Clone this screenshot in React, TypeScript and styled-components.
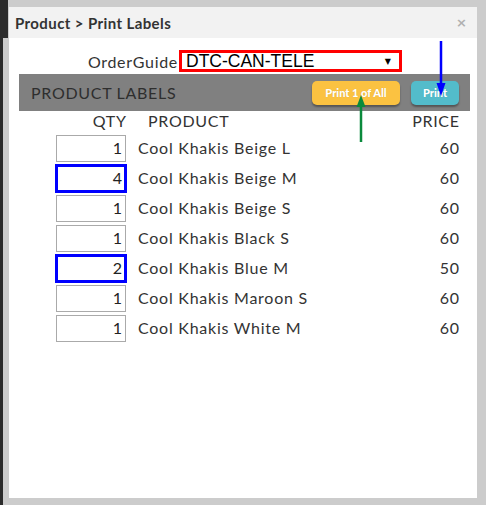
import React from "react";
import styled, { createGlobalStyle } from "styled-components";

const Global = createGlobalStyle`
  html, body { margin: 0; padding: 0; }
  body {
    background: #cccccc;
    font-family: Lato, "Open Sans", sans-serif;
    color: #333;
  }
  #root { min-height: 505px; }
`;

const Page = styled.div`
  position: relative;
  height: 505px;
  box-sizing: border-box;
  border-left: 3px solid #2b2b2b;
  padding: 7px 9px 7px 6px;
  &::before {
    content: "";
    position: absolute;
    left: -3px;
    top: 0;
    width: 8px;
    height: 38px;
    background: #2b2b2b;
  }
`;

const Modal = styled.div`
  position: relative;
  height: 491px;
  background: #fff;
  display: flex;
  flex-direction: column;
`;

const TitleBar = styled.div`
  height: 31px;
  background: #f2f2f2;
  display: flex;
  align-items: center;
  justify-content: space-between;
  padding: 0 10px 0 6px;
`;

const Title = styled.div`
  font-weight: 700;
  font-size: 15px;
  letter-spacing: 0.4px;
  color: #333;
`;

const Close = styled.span`
  font-size: 13px;
  font-weight: 700;
  color: #b0b0b0;
  font-family: "DejaVu Sans", sans-serif;
`;

const Body = styled.div`
  padding: 12px 7px 0 10px;
  display: flex;
  flex-direction: column;
`;

const GuideRow = styled.div`
  display: flex;
  align-items: center;
  height: 22px;
`;

const GuideLabel = styled.span`
  width: 159px;
  text-align: right;
  font-size: 16px;
  letter-spacing: 0.7px;
  color: #333;
`;

const Select = styled.div`
  margin-left: 1px;
  width: 223px;
  height: 22px;
  box-sizing: border-box;
  border: 3px solid #ff0000;
  display: flex;
  align-items: center;
  justify-content: space-between;
  padding: 0 8px 0 4px;
  font-family: "Liberation Sans", Arial, sans-serif;
  font-size: 17.5px;
  color: #000;
`;

const Caret = styled.span`
  font-size: 8px;
  color: #000;
  font-family: "DejaVu Sans", sans-serif;
`;

const Bar = styled.div`
  margin-top: 2px;
  height: 37px;
  background: #808080;
  display: flex;
  align-items: center;
  padding: 0 11px 0 12px;
`;

const BarTitle = styled.span`
  font-size: 16px;
  letter-spacing: 0.7px;
  color: #2e2e2e;
  flex: 1;
`;

const Btn = styled.button<{ $bg: string; $w: number }>`
  height: 24px;
  width: ${(p) => p.$w}px;
  margin-left: 11px;
  border: none;
  border-radius: 5px;
  background: ${(p) => p.$bg};
  color: #fff;
  font-family: Lato, sans-serif;
  font-weight: 900;
  font-size: 11px;
  box-shadow: 0 2px 2px rgba(0, 0, 0, 0.35);
  text-shadow: 0 0 1px rgba(0, 0, 0, 0.15);
  padding: 0;
`;

const Table = styled.div`
  display: grid;
  grid-template-columns: 70px 1fr auto;
  column-gap: 12px;
  padding: 0 11px 0 37px;
`;

const HeadCell = styled.div<{ $align?: string; $pad?: number }>`
  height: 22px;
  box-sizing: border-box;
  display: flex;
  align-items: flex-end;
  justify-content: ${(p) => p.$align || "flex-start"};
  padding-left: ${(p) => p.$pad || 0}px;
  padding-bottom: 2px;
  font-size: 16px;
  letter-spacing: 0.7px;
  color: #333;
  line-height: 20px;
`;

const EndText = styled.span`
  margin-right: -0.7px;
`;

const Cell = styled.div<{ $align?: string }>`
  height: 30px;
  box-sizing: border-box;
  padding-bottom: 2px;
  display: flex;
  align-items: center;
  justify-content: ${(p) => p.$align || "flex-start"};
  font-size: 16px;
  letter-spacing: 0.75px;
  color: #333;
`;

const QtyCell = styled.div`
  height: 30px;
  display: flex;
  align-items: center;
`;

const QtyBox = styled.div<{ $mark?: boolean }>`
  width: 70px;
  height: 27px;
  box-sizing: border-box;
  border: 1px solid #aaa;
  display: flex;
  align-items: center;
  justify-content: flex-end;
  padding: 0 3px 1px 0;
  font-size: 16px;
  color: #222;
  ${(p) => (p.$mark ? "outline: 3px solid #0000ff; outline-offset: -2px;" : "")}
`;

const Overlay = styled.svg`
  position: absolute;
  left: -9px;
  top: -7px;
  pointer-events: none;
`;

const rows = [
  { q: 1, name: "Cool Khakis Beige L", price: 60 },
  { q: 4, name: "Cool Khakis Beige M", price: 60, mark: true },
  { q: 1, name: "Cool Khakis Beige S", price: 60 },
  { q: 1, name: "Cool Khakis Black S", price: 60 },
  { q: 2, name: "Cool Khakis Blue M", price: 50, mark: true },
  { q: 1, name: "Cool Khakis Maroon S", price: 60 },
  { q: 1, name: "Cool Khakis White M", price: 60 },
];

export default function App() {
  return (
    <>
      <Global />
      <Page>
        <Modal>
          <TitleBar>
            <Title>Product &gt; Print Labels</Title>
            <Close>×</Close>
          </TitleBar>
          <Body>
            <GuideRow>
              <GuideLabel>OrderGuide</GuideLabel>
              <Select>
                <span>DTC-CAN-TELE</span>
                <Caret>▼</Caret>
              </Select>
            </GuideRow>
            <Bar>
              <BarTitle>PRODUCT LABELS</BarTitle>
              <Btn $bg="#fbc241" $w={88}>Print 1 of All</Btn>
              <Btn $bg="#53bccb" $w={48}>Print</Btn>
            </Bar>
            <Table>
              <HeadCell $align="flex-end"><EndText>QTY</EndText></HeadCell>
              <HeadCell $pad={10}>PRODUCT</HeadCell>
              <HeadCell $align="flex-end"><EndText>PRICE</EndText></HeadCell>
              {rows.map((r, i) => (
                <React.Fragment key={i}>
                  <QtyCell>
                    <QtyBox $mark={r.mark}>{r.q}</QtyBox>
                  </QtyCell>
                  <Cell>{r.name}</Cell>
                  <Cell $align="flex-end"><EndText>{r.price}</EndText></Cell>
                </React.Fragment>
              ))}
            </Table>
          </Body>
          <Overlay width="486" height="505" viewBox="0 0 486 505">
            <line x1="441" y1="41" x2="441" y2="86" stroke="#0000ff" strokeWidth="2.5" />
            <polygon points="436.5,83 445.5,83 441,96" fill="#0000ff" />
            <line x1="361" y1="104" x2="361" y2="142" stroke="#0a8a3c" strokeWidth="2.5" />
            <polygon points="356.5,107 365.5,107 361,95" fill="#0a8a3c" />
          </Overlay>
        </Modal>
      </Page>
    </>
  );
}
